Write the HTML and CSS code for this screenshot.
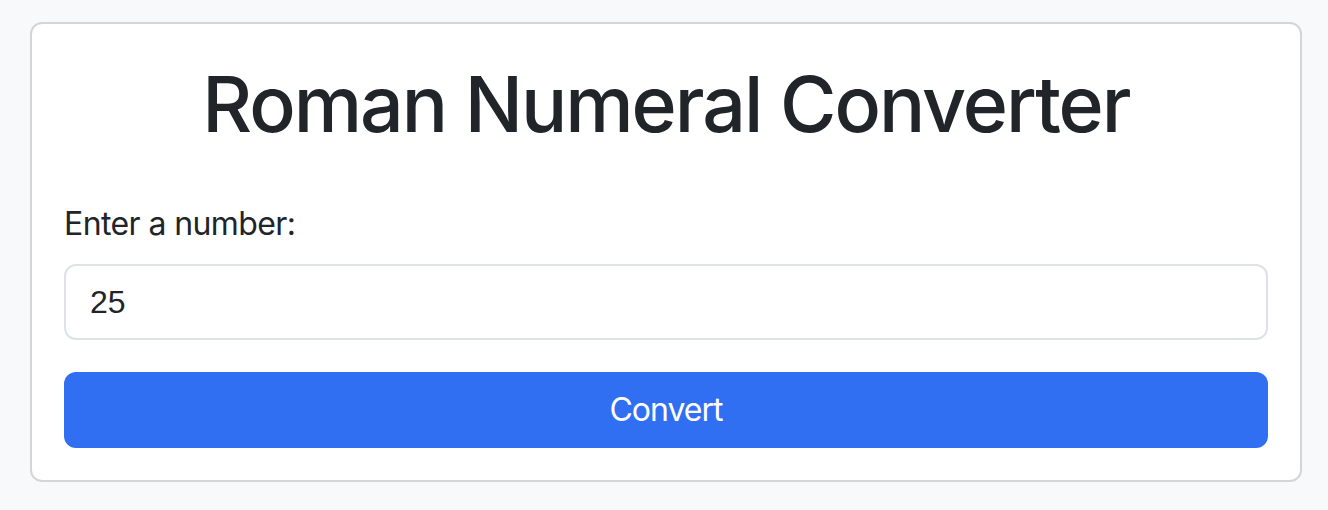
FILE: index.html
```html
<!DOCTYPE html>
<html lang="en">
<head>
<meta charset="utf-8">
<title>Roman Numeral Converter</title>
<link rel="stylesheet" href="styles.css">
</head>
<body>
  <div class="page">
    <div class="card">
      <h1 class="title">Roman Numeral Converter</h1>
      <form class="form">
        <label class="label" for="num">Enter a number:</label>
        <input class="input" id="num" type="text" value="25">
        <button class="btn" type="button">Convert</button>
      </form>
    </div>
  </div>
</body>
</html>
```

FILE: styles.css
```css
* { box-sizing: border-box; }
html, body {
  margin: 0;
  background: #f8f9fa;
  color: #212529;
  font-family: Inter, "Noto Sans", sans-serif;
}
.page {
  padding: 22px 26px 28px 30px;
}
.card {
  background: #fff;
  border: 2px solid #d4d5d6;
  border-radius: 12px;
  padding: 32px;
}
.title {
  margin: 0 0 48px;
  font-size: 77px;
  font-weight: 500;
  letter-spacing: -2px;
  line-height: 96px;
  text-align: center;
}
.form {
  display: flex;
  flex-direction: column;
}
.label {
  font-size: 32px;
  letter-spacing: -0.6px;
  line-height: 48px;
  margin-bottom: 16px;
}
.input {
  width: 100%;
  height: 76px;
  border: 2px solid #dee2e6;
  border-radius: 12px;
  padding: 12px 24px;
  font-family: "Liberation Sans", Arial, sans-serif;
  font-size: 32px;
  line-height: 48px;
  color: #212529;
  background: #fff;
  outline: none;
}
.btn {
  margin-top: 32px;
  height: 76px;
  width: 100%;
  border: 2px solid transparent;
  border-radius: 12px;
  background: #316ff2;
  color: #fff;
  font-family: Inter, "Noto Sans", sans-serif;
  font-size: 32px;
  letter-spacing: -1px;
  line-height: 48px;
  padding: 12px 24px;
}
```
